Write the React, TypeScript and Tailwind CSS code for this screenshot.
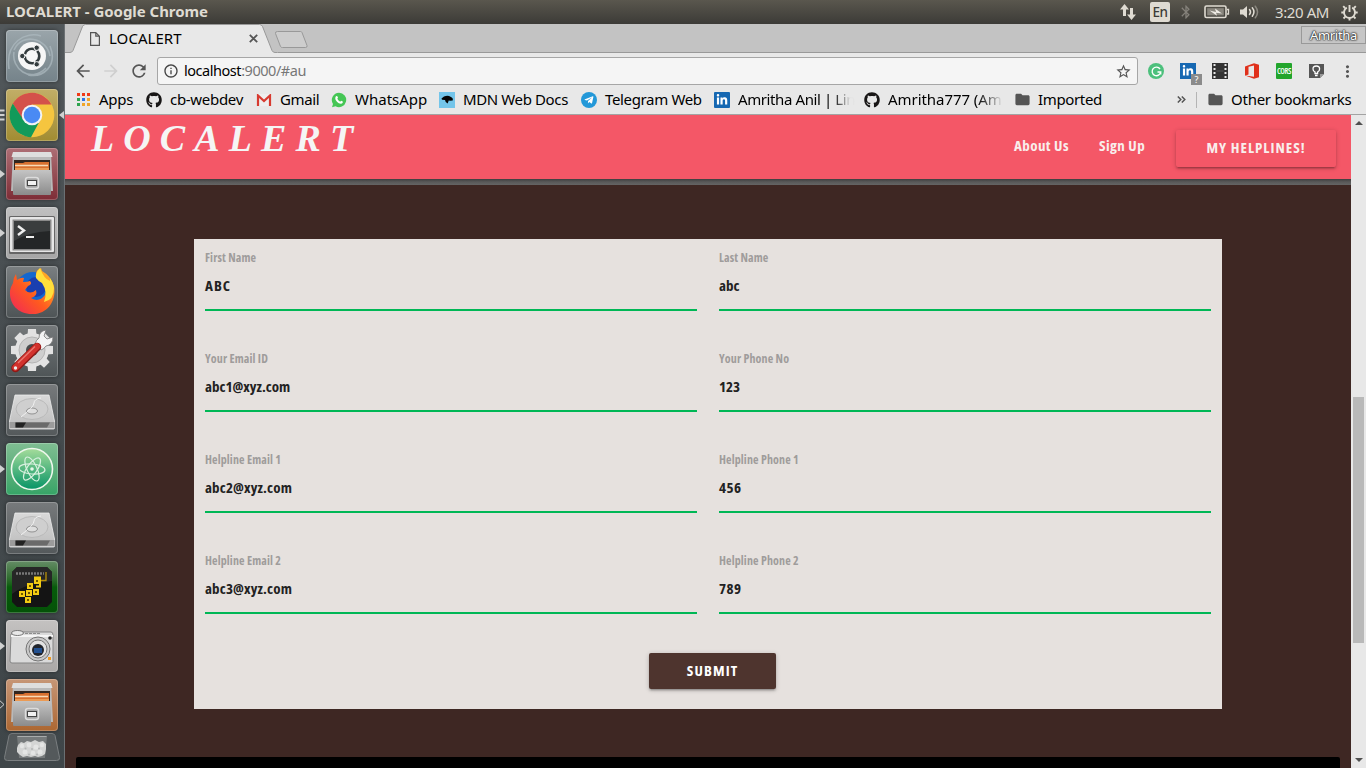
import React from "react";
import { FaGithub, FaLinkedinIn, FaTelegramPlane } from "react-icons/fa";
import {
  MdArrowBack,
  MdArrowForward,
  MdBluetooth,
  MdFolder,
  MdInfoOutline,
  MdMoreVert,
  MdRefresh,
  MdStarBorder,
} from "react-icons/md";

type Kids = { children?: React.ReactNode };

/* ---------- Desktop panel ---------- */

function TopPanel() {
  return (
    <div className="flex h-6 shrink-0 items-center bg-linear-to-b from-[#5a574e] to-[#3c3b37] pl-1.5 text-[#dfdbd2]">
      <span className="pb-[2px] text-[15px] leading-[22px] font-bold tracking-[-0.04px] whitespace-nowrap">LOCALERT - Google Chrome</span>
      <svg className="ml-auto h-[18px] w-[18px]" viewBox="0 0 18 18" fill="#dfdbd2">
        <path d="M5.500 1 10 6.500H7V13H4V6.500H1zM12.500 17 8 11.500h3V5h3v6.500h3z" />
      </svg>
      <span className="ml-[13px] flex h-5 w-5 items-center justify-center rounded-[2px] bg-[#dfdbd2] pt-px text-[13.500px] font-medium tracking-[-0.5px] text-[#3c3b37]">
        En
      </span>
      <MdBluetooth className="ml-[8px] h-4 w-4 text-[#84817a]" />
      <svg className="ml-[10px] h-4 w-[26px]" viewBox="0 0 26 16">
        <rect x="1" y="2" width="21" height="11.500" rx="1.500" fill="none" stroke="#dfdbd2" strokeWidth="1.600" />
        <rect x="3.200" y="4.200" width="16.600" height="7.200" fill="#8a877f" />
        <path d="M23 5.500h1.500v4.500H23" fill="none" stroke="#dfdbd2" strokeWidth="1.300" />
        <path d="M5.500 6.500 12 8l-1-3.500 7 5L12 8.700l1 3z" fill="#efece5" />
      </svg>
      <svg className="ml-[10px] h-4 w-5" viewBox="0 0 20 16" fill="none" strokeWidth="1.500" strokeLinecap="round">
        <path d="M0 5.500h3L7 2v12l-4-3.500H0z" fill="#dfdbd2" />
        <path d="M9.500 5.500q2 2.500 0 5M12.300 3.800q3.300 4.200 0 8.400" stroke="#dfdbd2" />
        <path d="M15.300 2.200q4.500 5.800 0 11.600" stroke="#8a877f" />
      </svg>
      <span className="ml-[15px] w-[54px] pb-px text-[15px] leading-[22px] tracking-[-0.4px] whitespace-nowrap">3:20 AM</span>
      <svg className="mr-2 ml-[12px] h-[17px] w-[17px]" viewBox="0 0 17 17" fill="none" stroke="#dfdbd2">
        <path d="M5.800 3.700a5.500 5.500 0 1 0 5.400 0" strokeWidth="1.900" />
        <path d="M8.500 1v7" strokeWidth="1.900" />
        <path d="M2.200 2.200 4 4M14.800 2.200 13 4M.3 8.500h2.500M14.200 8.500h2.500M2.500 14.500l1.800-1.800M14.500 14.500l-1.800-1.800M8.500 14v2.600" strokeWidth="1.900" />
      </svg>
    </div>
  );
}

/* ---------- Launcher ---------- */

function UbuntuIcon() {
  return (
    <svg viewBox="0 0 52 52" className="h-full w-full" fill="none">
      <path d="M3 39C-1 12 20 1 35 6M8 20c8-18 33-12 36 6M44 16c8 20-7 32-22 29M40 38C24 54 5 38 8 22" stroke="#aebac0" strokeWidth="1.600" opacity=".7" />
      <circle cx="26" cy="26" r="14" fill="#f6f6f6" />
      <circle cx="26" cy="26" r="7.300" stroke="#333b3d" strokeWidth="2.600" strokeDasharray="13.300 2" strokeDashoffset="6" />
      <g fill="#333b3d" stroke="#f6f6f6">
        <circle cx="16.300" cy="26" r="2.700" />
        <circle cx="30.700" cy="17.700" r="2.700" />
        <circle cx="30.700" cy="34.300" r="2.700" />
      </g>
    </svg>
  );
}

function ChromeIcon() {
  return (
    <svg viewBox="0 0 52 52" className="h-full w-full">
      <circle cx="26" cy="26" r="22.300" fill="#f5c53f" />
      <path d="M6.800 14.500A22.300 22.300 0 0 1 45.400 15.500H26L17 31z" fill="#d4514a" />
      <path d="M6.800 14.500A22.300 22.300 0 0 0 25 48.200L34 31.500 17.500 31z" fill="#119a5a" />
      <circle cx="26" cy="26" r="10.300" fill="#f3f3f3" />
      <circle cx="26" cy="26" r="8.300" fill="#4a8af4" />
    </svg>
  );
}

function FilesIcon() {
  return (
    <svg viewBox="0 0 52 52" className="h-full w-full">
      <defs>
        <linearGradient id="drawer" x1="0" y1="0" x2="0" y2="1">
          <stop offset="0" stopColor="#c4c4c4" />
          <stop offset="1" stopColor="#8b8b8b" />
        </linearGradient>
      </defs>
      <path d="M7 5q0-1 1-1h36q1 0 1 1l2 38H5z" fill="#b9b9b9" />
      <path d="M7 4h38l1.500 5h-41z" fill="#dedede" />
      <rect x="8" y="12" width="36" height="12" fill="#33261f" />
      <path d="M9 15h8l2-1h24v8H9z" fill="#d9702f" />
      <path d="M9 17.500h33" stroke="#f8d9b6" strokeWidth="1.300" />
      <path d="M9 20h34v2H9z" fill="#eb9b55" />
      <rect x="7" y="22" width="38" height="25" rx="1" fill="url(#drawer)" />
      <rect x="19.500" y="29.500" width="13" height="11" rx="2.500" fill="#a6a6a6" stroke="#dcdcdc" strokeWidth="1.500" />
      <rect x="21.500" y="32.500" width="9" height="5" fill="#f1f1f1" stroke="#444" />
    </svg>
  );
}

function TerminalIcon() {
  return (
    <svg viewBox="0 0 52 52" className="h-full w-full">
      <rect x="3" y="9" width="46" height="38" rx="1.500" fill="#666" />
      <rect x="4" y="10" width="44" height="35" rx="1" fill="#e6e6e6" />
      <rect x="6.500" y="12.500" width="39" height="31" fill="#8a8a8a" />
      <rect x="8" y="14" width="36" height="28" fill="#242627" />
      <path d="M8 14h36v10Q22 25 8 34z" fill="#3a3d3e" />
      <path d="m12 19 6 4.500-6 4.500" fill="none" stroke="#eee" strokeWidth="2.400" />
      <path d="M20 30h8" stroke="#eee" strokeWidth="2" />
    </svg>
  );
}

function FirefoxIcon() {
  return (
    <svg viewBox="0 0 52 52" className="h-full w-full">
      <defs>
        <linearGradient id="fox" x1="0" y1="1" x2="1" y2="0">
          <stop offset="0" stopColor="#f0245c" />
          <stop offset=".45" stopColor="#ff5a1f" />
          <stop offset="1" stopColor="#ffc928" />
        </linearGradient>
      </defs>
      <circle cx="27" cy="24" r="18" fill="#1467cf" />
      <circle cx="30" cy="21" r="10" fill="#1a3fb0" />
      <path d="M10 8l1 6q4-3 7-2l-1 4q5 0 7-1 3 3-2 5l-3 4q5 5 11 0 2 6-5 8 8 5 14-3 4-7-1-15-8-2-8-6 0-4 5-6l1 3q9 5 12 15c3 17-9 29-22 28C12 48 3 38 4 25q1-5 3-8 0-5 3-9z" fill="url(#fox)" />
      <path d="M34 2q-5 5-4 10 2 3 6 5 6 9 2 19 10-2 10-14-1-6-4-10v3q-6-2-10-13z" fill="#ffdf3c" />
    </svg>
  );
}

function SettingsIcon() {
  const teeth = [0, 45, 90, 135, 180, 225, 270, 315];
  return (
    <svg viewBox="0 0 52 52" className="h-full w-full">
      {teeth.map((a) => (
        <path key={a} d="M21.500 11 22 4h8l.5 7z" fill="#e2e2e2" transform={`rotate(${a} 26 25)`} />
      ))}
      <circle cx="26" cy="25" r="17" fill="#e2e2e2" />
      <circle cx="26" cy="25" r="13" fill="#cecece" stroke="#b5b5b5" />
      <circle cx="26" cy="25" r="6" fill="#494c4e" />
      <path d="M29 19q1-4 4-6 0-7 7-8l-2 6 3 3 6-2q0 8-7 9-2 3-5 4z" fill="#f4f4f4" stroke="#777" strokeWidth=".8" />
      <path d="M9.500 43 31 22" stroke="#8f1916" strokeWidth="8.500" strokeLinecap="round" />
      <path d="M9.500 42.500 31 21.500" stroke="#d2322d" strokeWidth="6.500" strokeLinecap="round" />
      <path d="M12 38 29 21.500" stroke="#ea7a72" strokeWidth="1.300" />
      <circle cx="9.500" cy="43" r="1.700" fill="#eee" />
    </svg>
  );
}

function DiskIcon() {
  return (
    <svg viewBox="0 0 52 52" className="h-full w-full">
      <defs>
        <linearGradient id="disk" x1="0" y1="0" x2="0" y2="1">
          <stop offset="0" stopColor="#d9d9d9" />
          <stop offset="1" stopColor="#bdbdbd" />
        </linearGradient>
      </defs>
      <path d="M9 11h34l5.500 26v7q0 1-1 1h-43q-1 0-1-1v-7z" fill="url(#disk)" stroke="#eee" strokeWidth=".8" />
      <ellipse cx="26" cy="25" rx="16" ry="10.500" fill="#cfcfcf" stroke="#b4b4b4" strokeWidth=".8" />
      <ellipse cx="26" cy="27" rx="5.500" ry="3" fill="#dedede" stroke="#929292" />
      <path d="M35 14q-7 1-7 5 0 4-13 14" fill="none" stroke="#f1f1f1" />
      <path d="M3.500 38h45v6h-45z" fill="#9b9b9b" />
      <path d="M9.500 38.500H44l-3 5H9.500z" fill="#6a6a6a" />
      <path d="M9.500 38.500H20l-3 5H9.500z" fill="#222" />
    </svg>
  );
}

function AtomIcon() {
  return (
    <svg viewBox="0 0 52 52" className="h-full w-full" fill="none">
      <defs>
        <linearGradient id="atom" x1="0" y1="0" x2="0" y2="1">
          <stop offset="0" stopColor="#a5dc9b" />
          <stop offset="1" stopColor="#079466" />
        </linearGradient>
      </defs>
      <circle cx="26" cy="26" r="20.500" fill="url(#atom)" stroke="#eef7ec" strokeWidth="1.600" />
      <g stroke="#d8f0df" strokeWidth="1.200">
        <ellipse cx="26" cy="26" rx="13" ry="5" transform="rotate(5 26 26)" />
        <ellipse cx="26" cy="26" rx="13" ry="5" transform="rotate(65 26 26)" />
        <ellipse cx="26" cy="26" rx="13" ry="5" transform="rotate(125 26 26)" />
      </g>
      <circle cx="26" cy="26" r="1.800" fill="#e7f7ea" />
    </svg>
  );
}

function SnakeIcon() {
  const cells = [[28, 17], [21, 22], [13, 30], [20, 29], [27, 28], [19, 36]];
  return (
    <svg viewBox="0 0 52 52" className="h-full w-full">
      <path d="M11 6h30l5 5v30l-5 5H11l-5-5V11z" fill="#141414" />
      <path d="M11 6h30l5 5v9Q20 22 6 33V11z" fill="#262626" />
      <path d="M10 12.500h28" stroke="#777" strokeWidth="2.500" strokeDasharray="2 1" />
      <path d="M40 11v8.500H31" fill="none" stroke="#b68f09" strokeWidth="1.300" />
      {cells.map(([x, y]) => (
        <g key={`${x}-${y}`}>
          <rect x={x} y={y} width="6" height="6" fill="#f2ca13" />
          <rect x={x + 2} y={y + 2} width="2" height="2" fill="#6d5600" />
        </g>
      ))}
      <path d="M28 16.500h6v9h-4" fill="none" stroke="#f2ca13" strokeWidth="2" />
    </svg>
  );
}

function CameraIcon() {
  return (
    <svg viewBox="0 0 52 52" className="h-full w-full">
      <path d="M5 14q7-5 12-2h28q2 0 2 3v27q0 1-2 1H6q-2 0-2-2z" fill="#dadada" stroke="#858585" />
      <path d="M5 16h42" stroke="#f5f5f5" strokeWidth="2" />
      <ellipse cx="11.500" cy="13" rx="6" ry="2.500" fill="#e8e8e8" stroke="#777" />
      <path d="M19 13.500h16" stroke="#8c8c8c" strokeDasharray="3 1" />
      <circle cx="32" cy="29" r="12" fill="#c9c9c9" stroke="#747474" />
      <circle cx="32" cy="29" r="9" fill="#e2e2e2" stroke="#777" />
      <circle cx="32" cy="30" r="6" fill="#20242c" />
      <rect x="28" y="28" width="8" height="5" fill="#225090" />
      <circle cx="44" cy="18" r="1.800" fill="#222" />
      <rect x="42" y="37" width="3" height="3" fill="#ef9a22" />
    </svg>
  );
}

function TrashIcon() {
  return (
    <svg viewBox="0 0 56 28" className="h-7 w-14">
      <path d="M8 .5h40q2 0 3 2l4.500 22q.5 3-3 3h-49q-3.500 0-3-3L5 2.500q1-2 3-2z" fill="#54595b" stroke="#7b7f81" />
      <path d="M13 3h30l-2 22H15z" fill="#767a7b" />
      <path d="M13.500 3.500h29" stroke="#a9acac" />
      <path d="M14 12l3-3 3 1 3-2 4 1 4-2 4 2 4-1 3 3v5l-1 5-3 2-4 1-3-1-4 1-4-1-4 1-3-2-3-3v-4z" fill="#d4d5d4" />
      <g fill="#e4e5e4">
        <circle cx="18" cy="13" r="2.200" />
        <circle cx="25" cy="12" r="2.400" />
        <circle cx="32" cy="14" r="2.600" />
        <circle cx="38" cy="12" r="2.200" />
        <circle cx="21" cy="19" r="2.500" />
        <circle cx="29" cy="20" r="2.300" />
        <circle cx="36" cy="19" r="2.500" />
      </g>
      <g fill="#b4b6b6">
        <circle cx="21.500" cy="15.500" r="1" />
        <circle cx="28" cy="16" r="1" />
        <circle cx="35" cy="15.500" r="1" />
        <circle cx="25" cy="21.500" r="1" />
        <circle cx="33" cy="21.500" r="1" />
      </g>
    </svg>
  );
}

function Tile({ color, mark, children }: Kids & { color: string; mark?: "run" | "many" | "outline" }) {
  return (
    <div className="relative flex h-[52px] w-full shrink-0 justify-center">
      <div className={`h-[52px] w-[52px] rounded-[4px] shadow-[inset_0_0_0_1px_rgba(255,255,255,0.22),0_0_4px_rgba(0,0,0,0.45)] ${color}`}>
        {children}
      </div>
      {mark === "run" && (
        <svg className="absolute top-[22px] left-0" width="5" height="8" viewBox="0 0 5 8">
          <path d="M0 0v8l5-4z" fill="#d0d1d1" />
        </svg>
      )}
      {mark === "outline" && (
        <svg className="absolute top-[21px] left-0" width="5" height="9" viewBox="0 0 5 9">
          <path d="M0 .8l4 3.700-4 3.700" fill="none" stroke="#d0d1d1" />
        </svg>
      )}
      {mark === "many" && (
        <>
          <svg className="absolute top-[20px] left-0" width="5" height="12" viewBox="0 0 5 12">
            <path d="M0 1.500h4.500M0 6h4.500M0 10.500h4.500" stroke="#d0d1d1" strokeWidth="2" />
          </svg>
          <svg className="absolute top-[22px] right-0" width="5" height="8" viewBox="0 0 5 8">
            <path d="M5 0v8L0 4z" fill="#d0d1d1" />
          </svg>
        </>
      )}
    </div>
  );
}

function Launcher() {
  return (
    <aside className="flex w-[65px] shrink-0 flex-col gap-[7px] border-r border-[#6b7073] bg-linear-to-b from-[#52585b] via-[#454b4e] to-[#3f4649] pt-1.5">
      <Tile color="bg-linear-to-b from-[#9aa5aa] to-[#75838a]"><UbuntuIcon /></Tile>
      <Tile color="bg-linear-to-b from-[#c2ae67] to-[#a18c31]" mark="many"><ChromeIcon /></Tile>
      <Tile color="bg-linear-to-b from-[#ad6e75] to-[#7d2c36]" mark="run"><FilesIcon /></Tile>
      <Tile color="bg-linear-to-b from-[#c0c0c0] to-[#a5a5a5]" mark="run"><TerminalIcon /></Tile>
      <Tile color="bg-linear-to-b from-[#7a7f81] to-[#4e5456]"><FirefoxIcon /></Tile>
      <Tile color="bg-linear-to-b from-[#75797b] to-[#4f5557]"><SettingsIcon /></Tile>
      <Tile color="bg-linear-to-b from-[#777a7c] to-[#54595b]"><DiskIcon /></Tile>
      <Tile color="bg-linear-to-b from-[#7fbd92] to-[#35a467]" mark="run"><AtomIcon /></Tile>
      <Tile color="bg-linear-to-b from-[#777a7c] to-[#54595b]"><DiskIcon /></Tile>
      <Tile color="bg-linear-to-b from-[#648c65] via-[#075c0b] to-[#045207]"><SnakeIcon /></Tile>
      <Tile color="bg-linear-to-b from-[#c4c2c1] to-[#aaa8a7]" mark="run"><CameraIcon /></Tile>
      <Tile color="bg-linear-to-b from-[#c69676] to-[#ac6731]" mark="outline"><FilesIcon /></Tile>
      <div className="-mt-[5px] flex shrink-0 justify-center"><TrashIcon /></div>
    </aside>
  );
}

/* ---------- Browser chrome ---------- */

function TabStrip() {
  return (
    <div className="flex h-[29px] shrink-0 bg-[#c3c3c3] shadow-[inset_0_-1px_0_#999]">
      <div className="grid">
        <svg className="col-start-1 row-start-1 h-[29px] w-[245px]" viewBox="0 0 245 29">
          <path d="M0 28.500h5q2 0 3-2L17.500 2.500q1-2 3-2h174q2 0 3 2l9.500 24q1 2 3 2h2.500V29H0z" fill="#e8e8e8" />
          <path d="M0 28.500h5q2 0 3-2L17.500 2.500q1-2 3-2h174q2 0 3 2l9.500 24q1 2 3 2h2" fill="none" stroke="#999" />
          <path d="M213.500 7h23q1 0 1.500 1l5 13q.5 2-1.500 2h-23q-1.500 0-2-1l-5-13q-.5-2 2-2z" transform="translate(-1 .5)" fill="#cdcdcd" stroke="#999" />
        </svg>
        <div className="col-start-1 row-start-1 flex h-[29px] items-center pl-[25px]">
          <svg className="h-[14px] w-[10px]" viewBox="0 0 10 14" fill="none" stroke="#555" strokeWidth="1.200">
            <path d="M.6.6h5.200l3.600 3.600v9.200H.6zM5.800.6v3.600h3.600" />
          </svg>
          <span className="ml-[9px] w-[140px] text-[15px] leading-none tracking-[0.05px]">LOCALERT</span>
          <svg className="h-[9px] w-[9px]" viewBox="0 0 9 9" stroke="#555" strokeWidth="1.800">
            <path d="M.8.800l7.400 7.400M8.200.8.800 8.200" />
          </svg>
        </div>
      </div>
      <div className="mt-[2px] ml-auto flex h-[18px] w-[65px] items-center justify-center border border-[#999] bg-[#c6c6c6] text-[13px] leading-none tracking-[-0.3px] text-white [text-shadow:0_0_1px_#333,0_0_1px_#333,0_0_2px_#333,0_0_2px_#333]">
        Amritha
      </div>
    </div>
  );
}

function Toolbar() {
  return (
    <div className="flex h-9 shrink-0 items-center text-[#555]">
      <MdArrowBack className="ml-[8px] h-5 w-5" />
      <MdArrowForward className="ml-[8px] h-5 w-5 text-[#cfcfcf]" />
      <MdRefresh className="ml-[8px] h-5 w-5" />
      <div className="ml-[8px] flex h-7 w-[981px] items-center rounded-[3px] border border-[#a6a6a6] bg-[#f5f5f5] px-[5px]">
        <MdInfoOutline className="h-4 w-4 text-[#444]" />
        <span className="ml-[5px] pb-[2px] text-[14.500px] leading-5 tracking-[-0.46px] text-[#777]">
          <span className="text-black">localhost</span>:9000/#au
        </span>
        <MdStarBorder className="ml-auto h-[17px] w-[17px]" />
      </div>
      <span className="ml-[10px] flex h-4 w-4 items-center justify-center rounded-full bg-[#4cc07c]">
        <svg className="h-[11px] w-[11px]" viewBox="0 0 11 11" fill="none" stroke="#fff" strokeWidth="1.400">
          <path d="M9 3A4.300 4.300 0 1 0 9.700 6H6.500M9.700 5.500v3" />
        </svg>
      </span>
      <span className="relative ml-4 flex h-4 w-4 items-center justify-center bg-[#1668b2]">
        <FaLinkedinIn className="h-3 w-3 text-white" />
        <span className="absolute top-[11px] left-[11px] flex h-[11px] w-[11px] items-center justify-center bg-[#8b8b8b] text-[9px] leading-none text-white">?</span>
      </span>
      <svg className="ml-4 h-4 w-4" viewBox="0 0 16 16">
        <path d="M0 0h16v16H0z" fill="#333" />
        <path d="M2.500 1v15M13.500 1v15" stroke="#e8e8e8" strokeWidth="2" strokeDasharray="2 2" />
        <path d="M4.500 8h7" stroke="#555" />
      </svg>
      <svg className="ml-4 h-4 w-4" viewBox="0 0 16 16">
        <path d="M1 3.500 10 .3l5 1.500v12.400l-5 1.500-9-3.200 9 1.200V2.500L4.500 3.800v7.600L1 12.700z" fill="#e0301b" />
      </svg>
      <span className="ml-4 flex h-4 w-4 items-center justify-center overflow-hidden rounded-[1px] bg-[#22a52c]">
        <span className="font-['Open_Sans',sans-serif] text-[8px] leading-none font-semibold font-stretch-condensed tracking-[-0.4px] text-white">CORS</span>
      </span>
      <svg className="ml-[17px] h-4 w-4" viewBox="0 0 16 16">
        <path d="M0 1h15v10l-4 4H0z" fill="#555" />
        <path d="M11 15v-4h4z" fill="#999" />
        <path d="M6 10.500V9q-2-1-2-3 0-3 3.300-3t3.300 3q0 2-2 3v1.500zM6 12.500h2.600" fill="none" stroke="#fff" strokeWidth="1.300" />
      </svg>
      <MdMoreVert className="ml-[13px] h-[19px] w-[19px]" />
    </div>
  );
}

function Bookmark({ icon, width, tight, children }: Kids & { icon: React.ReactNode; width: string; tight: string }) {
  return (
    <div className={`flex shrink-0 items-center gap-2 ${width}`}>
      <span className="flex h-4 w-4 shrink-0 items-center justify-center">{icon}</span>
      <span className={`pb-px whitespace-nowrap ${tight}`}>{children}</span>
    </div>
  );
}

function AppsIcon() {
  return (
    <svg className="h-[13px] w-[13px]" viewBox="0 0 13 13">
      <path d="M0 0h3v3H0zM5 0h3v3H5zM10 0h3v3h-3z" fill="#f03a17" />
      <path d="M0 5h3v3H0zM0 10h3v3H0z" fill="#2da44e" />
      <path d="M5 5h3v3H5z" fill="#2d74e8" />
      <path d="M10 5h3v3h-3zM5 10h3v3H5zM10 10h3v3h-3z" fill="#f0a52a" />
    </svg>
  );
}

function BookmarkBar() {
  return (
    <div className="flex h-[26px] shrink-0 items-center border-b border-[#a3a3a3] pr-[14px] pb-1 pl-[10px] text-[15px] leading-5">
      <Bookmark width="w-[71px]" tight="tracking-[-0.3px]" icon={<AppsIcon />}>Apps</Bookmark>
      <Bookmark width="w-[110px]" tight="tracking-[-0.3px]" icon={<FaGithub className="h-4 w-4 text-[#181616]" />}>cb-webdev</Bookmark>
      <Bookmark
        width="w-[75px]"
        tight="tracking-[-0.4px]"
        icon={
          <svg className="h-3 w-4" viewBox="0 0 16 12">
            <path d="M1 0h14v12H1z" fill="#eee" />
            <path d="M2 12V1.500l6 5.500 6-5.500V12" fill="none" stroke="#d73a30" strokeWidth="2.200" />
          </svg>
        }
      >
        Gmail
      </Bookmark>
      <Bookmark
        width="w-[108px]"
        tight="tracking-[0px]"
        icon={
          <svg className="h-4 w-4" viewBox="0 0 16 16">
            <path d="M8 .8a7.200 7.200 0 1 1-3.500 13.500L1 15.300l1-3.400A7.200 7.200 0 0 1 8 .8z" fill="#45c655" />
            <path d="M5 4.300q1-.8 1.500.3l.5 1.200-.7 1q1 2 2.900 2.900l.9-.9 1.700.8q.4 1.700-1.600 2.100C7.500 12 4 8.500 4.300 6q.1-1 .7-1.700z" fill="#fff" />
          </svg>
        }
      >
        WhatsApp
      </Bookmark>
      <Bookmark
        width="w-[142px]"
        tight="tracking-[-0.38px]"
        icon={
          <svg className="h-4 w-4" viewBox="0 0 16 16">
            <path d="M0 0h16v16H0z" fill="#74c5ea" />
            <path d="M2.500 6.500 5 4.500q4-1.500 6.500.3 3 1.200 2.200 3.700l-2.500.2-1.500-.2-1 3q-2.500-1-2.700-3.500L3 7.800z" fill="#050505" />
          </svg>
        }
      >
        MDN Web Docs
      </Bookmark>
      <Bookmark
        width="w-[133px]"
        tight="tracking-[-0.35px]"
        icon={
          <span className="flex h-4 w-4 items-center justify-center rounded-full bg-[#2398d8]">
            <FaTelegramPlane className="-ml-px h-[10px] w-[10px] text-white" />
          </span>
        }
      >
        Telegram Web
      </Bookmark>
      <Bookmark
        width="w-[150px]"
        tight="bg-linear-to-r from-black from-78% to-[#e4e4e4] to-96% bg-clip-text text-transparent tracking-[-0.4px]"
        icon={
          <span className="flex h-4 w-4 items-center justify-center rounded-[1px] bg-[#1668b2]">
            <FaLinkedinIn className="h-3 w-3 text-white" />
          </span>
        }
      >
        Amritha Anil | Lin
      </Bookmark>
      <Bookmark
        width="w-[150px]"
        tight="bg-linear-to-r from-black from-75% to-[#e0e0e0] bg-clip-text text-transparent tracking-[-0.05px]"
        icon={<FaGithub className="h-4 w-4 text-[#181616]" />}
      >
        Amritha777 (Am
      </Bookmark>
      <Bookmark width="w-[100px]" tight="tracking-[-0.35px]" icon={<MdFolder className="h-[17px] w-[17px] shrink-0 text-[#555]" />}>Imported</Bookmark>
      <svg className="ml-auto h-[7px] w-[9px] shrink-0" viewBox="0 0 9 7" fill="none" stroke="#555" strokeWidth="1.500">
        <path d="m.8.500 3 3-3 3M4.800.500l3 3-3 3" />
      </svg>
      <span className="ml-[10px] h-4 w-px bg-[#b4b4b4]" />
      <Bookmark width="ml-[10px] w-[145px]" tight="tracking-[-0.25px]" icon={<MdFolder className="h-[17px] w-[17px] shrink-0 text-[#555]" />}>Other bookmarks</Bookmark>
    </div>
  );
}

/* ---------- Web page ---------- */

function Field({ label, value, spacing = "tracking-normal" }: { label: string; value: string; spacing?: string }) {
  return (
    <div className="h-[101px]">
      <div className="border-b-2 border-[#00b755] pt-[10px]">
        <label className="block h-[19px] text-[12px] leading-[18px] font-bold tracking-[0.12px] text-[#9f9c9b]">{label}</label>
        <div className={`h-[41px] pt-[7px] text-[15px] leading-5 font-bold text-[#222] ${spacing}`}>{value}</div>
      </div>
    </div>
  );
}

const fields: { label: string; value: string; spacing?: string }[] = [
  { label: "First Name", value: "ABC", spacing: "tracking-[1px]" },
  { label: "Last Name", value: "abc" },
  { label: "Your Email ID", value: "abc1@xyz.com" },
  { label: "Your Phone No", value: "123" },
  { label: "Helpline Email 1", value: "abc2@xyz.com", spacing: "tracking-[0.15px]" },
  { label: "Helpline Phone 1", value: "456", spacing: "tracking-[0.5px]" },
  { label: "Helpline Email 2", value: "abc3@xyz.com", spacing: "tracking-[0.15px]" },
  { label: "Helpline Phone 2", value: "789", spacing: "tracking-[0.4px]" },
];

function Page() {
  return (
    <div className="flex min-w-0 flex-1 flex-col bg-[#3e2723] font-['Open_Sans',sans-serif] font-stretch-condensed">
      <header className="flex h-16 shrink-0 bg-[#f45767] pr-[15px] pl-[26px] text-[15px] font-bold text-[#f9eeec]">
        <h1 className="font-['Liberation_Serif',serif] text-[38px] leading-[46px] font-bold tracking-[9.100px] text-[#f5f5f5] italic">
          LOCALERT
        </h1>
        <nav className="ml-auto flex items-start">
          <a className="w-[85px] pt-[19px] leading-[22px] tracking-[0.4px]">About Us</a>
          <a className="w-[77px] pt-[19px] leading-[22px] tracking-[0.4px]">Sign Up</a>
          <button className="mt-[15px] h-[37px] w-[160px] rounded-[2px] pb-[2px] tracking-[1px] shadow-[0_2px_2px_rgba(0,0,0,0.14),0_3px_1px_-2px_rgba(0,0,0,0.12),0_1px_5px_rgba(0,0,0,0.2)]">
            MY HELPLINES!
          </button>
        </nav>
      </header>
      <div className="h-1.5 shrink-0 bg-linear-to-b from-[#3f3f3f] via-[#595959] to-[#646464]" />
      <main className="mt-[54px] ml-[129px] flex h-[470px] w-[1028px] shrink-0 flex-col bg-[#e6e1de]">
        <div className="grid grid-cols-2 gap-x-[22px] px-[11px]">
          {fields.map((f) => (
            <Field key={f.label} {...f} />
          ))}
        </div>
        <button className="mt-[10px] ml-[455px] h-9 w-[127px] rounded-[2px] bg-[#4e342e] pb-[3px] text-[15px] leading-[22px] font-bold tracking-[1.100px] text-white shadow-[0_2px_2px_rgba(0,0,0,0.14),0_3px_1px_-2px_rgba(0,0,0,0.12),0_1px_5px_rgba(0,0,0,0.2)]">
          SUBMIT
        </button>
      </main>
      <div className="mx-[11px] mt-12 h-[11px] shrink-0 rounded-t-[2px] bg-black" />
    </div>
  );
}

function Scrollbar() {
  return (
    <div className="flex w-[15px] shrink-0 flex-col items-center bg-[#e8e8e8] pt-1.5">
      <svg width="8" height="4" viewBox="0 0 8 4"><path d="M0 4h8L4 0z" fill="#505050" /></svg>
      <div className="mt-[272px] h-[246px] w-[11px] bg-[#b9b9b9]" />
      <svg className="mt-auto mb-[6px]" width="8" height="4" viewBox="0 0 8 4"><path d="M0 0h8L4 4z" fill="#505050" /></svg>
    </div>
  );
}

export default function App() {
  return (
    <div className="flex h-[768px] w-[1366px] flex-col overflow-hidden bg-[#e8e8e8] font-['Noto_Sans',sans-serif] text-black">
      <TopPanel />
      <div className="flex min-h-0 flex-1">
        <Launcher />
        <div className="flex min-w-0 flex-1 flex-col">
          <TabStrip />
          <Toolbar />
          <BookmarkBar />
          <div className="flex min-h-0 flex-1">
            <Page />
            <Scrollbar />
          </div>
        </div>
      </div>
    </div>
  );
}
